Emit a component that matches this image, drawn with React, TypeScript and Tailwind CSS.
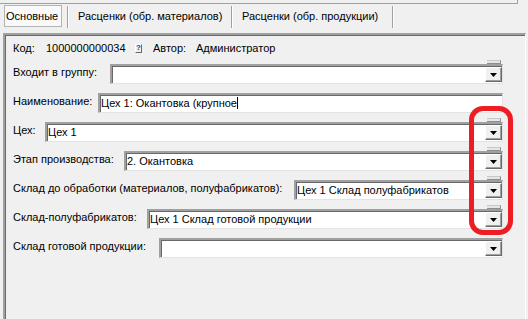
import React from "react";

function Caret() {
  return (
    <svg width="7" height="4" viewBox="0 0 7 4" className="block">
      <path d="M0 0H7L3.5 4Z" fill="#000" />
    </svg>
  );
}

function DropBtn({ bump }: { bump: boolean }) {
  return (
    <>
      {bump && (
        <div className="absolute -top-[6px] right-[1px] w-[14px] h-[4px] bg-[#e6e6e6] border-t border-t-[#c8c8c8] border-b border-b-[#8e8e8e] border-r border-r-[#8e8e8e]" />
      )}
      <div className="absolute top-[1px] bottom-[1px] right-0 w-[17px] bg-[#f0f0f0] border-t border-l border-t-white border-l-white border-b border-r border-b-[#696969] border-r-[#696969] shadow-[inset_-1px_-1px_0_#a0a0a0] flex items-center justify-center pt-[1px]">
        <Caret />
      </div>
    </>
  );
}

function Row({
  label,
  lw,
  iw,
  value,
  caret,
  drop = true,
  bump = true,
}: {
  label: string;
  lw: number;
  iw: number;
  value?: string;
  caret?: boolean;
  drop?: boolean;
  bump?: boolean;
}) {
  return (
    <div className="flex items-start h-[20px]">
      <div className="whitespace-nowrap leading-[14px] mt-[1px] shrink-0" style={{ width: lw }}>
        {label}
      </div>
      <div
        className="relative h-[20px] shrink-0 bg-white border-t-2 border-l-2 border-t-[#a0a0a0] border-l-[#a0a0a0] border-b border-r border-b-[#e3e3e3] border-r-[#e3e3e3] shadow-[inset_1px_1px_0_#696969]"
        style={{ width: iw }}
      >
        <div className="pl-[1px] leading-[16px] whitespace-nowrap flex items-center h-[16px]">
          {value}
          {caret && <span className="inline-block w-[1px] h-[12px] bg-black" />}
        </div>
        {drop && <DropBtn bump={bump} />}
      </div>
    </div>
  );
}

export default function App() {
  return (
    <div className="w-[528px] h-[319px] bg-[#f0f0f0] relative overflow-hidden text-[11px] text-black font-['Liberation_Sans',Arial,sans-serif]">
      <div className="h-[4px] w-[518px] border-b border-r border-[#a0a0a0]" />
      {/* tabs */}
      <div className="flex h-[29px] items-start">
        <div className="ml-[4px] mt-[1px] w-[58px] h-[22px] border border-[#b4b4b4] bg-[#f9f9f9] pl-[1px] flex items-center leading-[14px]">
          Основные
        </div>
        <div className="w-[5px]" />
        <div className="mt-[2px] w-[2px] h-[22px] border-l border-l-[#a0a0a0] border-r border-r-white" />
        <div className="w-[162px] pl-[9px] h-[24px] flex items-center leading-[14px] whitespace-nowrap">
          Расценки (обр. материалов)
        </div>
        <div className="mt-[2px] w-[2px] h-[22px] border-l border-l-[#a0a0a0] border-r border-r-white" />
        <div className="w-[159px] pl-[9px] h-[24px] flex items-center leading-[14px] whitespace-nowrap">
          Расценки (обр. продукции)
        </div>
        <div className="mt-[2px] w-[2px] h-[22px] border-l border-l-[#a0a0a0] border-r border-r-white" />
      </div>
      {/* panel */}
      <div className="ml-[3px] w-[523px] h-[300px] border-t-2 border-l-2 border-t-[#a0a0a0] border-l-[#a0a0a0] border-r border-r-white shadow-[inset_1px_1px_0_#696969] pl-[8px] pt-[6px] flex flex-col">
        <div className="flex items-center h-[14px] leading-[14px] whitespace-nowrap">
          <span className="w-[33px] shrink-0">Код:</span>
          <span className="w-[89px] shrink-0">1000000000034</span>
          <span className="w-[7px] h-[9px] shrink-0 bg-[#f0f0f0] border-t border-l border-t-white border-l-white border-b border-r border-b-[#696969] border-r-[#696969] flex items-center justify-center text-[8px] font-bold leading-none text-[#1d3d8f]">
            ?
          </span>
          <span className="w-[11px] shrink-0" />
          <span className="w-[43px] shrink-0">Автор:</span>
          <span>Администратор</span>
        </div>
        <div className="flex flex-col gap-[9px] mt-[9px]">
          <Row label="Входит в группу:" lw={97} iw={393} />
          <Row label="Наименование:" lw={85} iw={405} value="Цех 1: Окантовка (крупное" caret drop={false} />
          <Row label="Цех:" lw={32} iw={458} value="Цех 1" />
          <Row label="Этап производства:" lw={111} iw={379} value="2. Окантовка" />
          <Row label="Склад до обработки (материалов, полуфабрикатов):" lw={281} iw={209} value="Цех 1 Склад полуфабрикатов" />
          <Row label="Склад-полуфабрикатов:" lw={134} iw={356} value="Цех 1 Склад готовой продукции" />
          <Row label="Склад готовой продукции:" lw={146} iw={344} bump={false} />
        </div>
      </div>
      {/* red annotation */}
      <div className="absolute left-[469px] top-[106px] w-[44px] h-[129px] border-[5px] border-[#ee1d23] rounded-[14px]" />
    </div>
  );
}
